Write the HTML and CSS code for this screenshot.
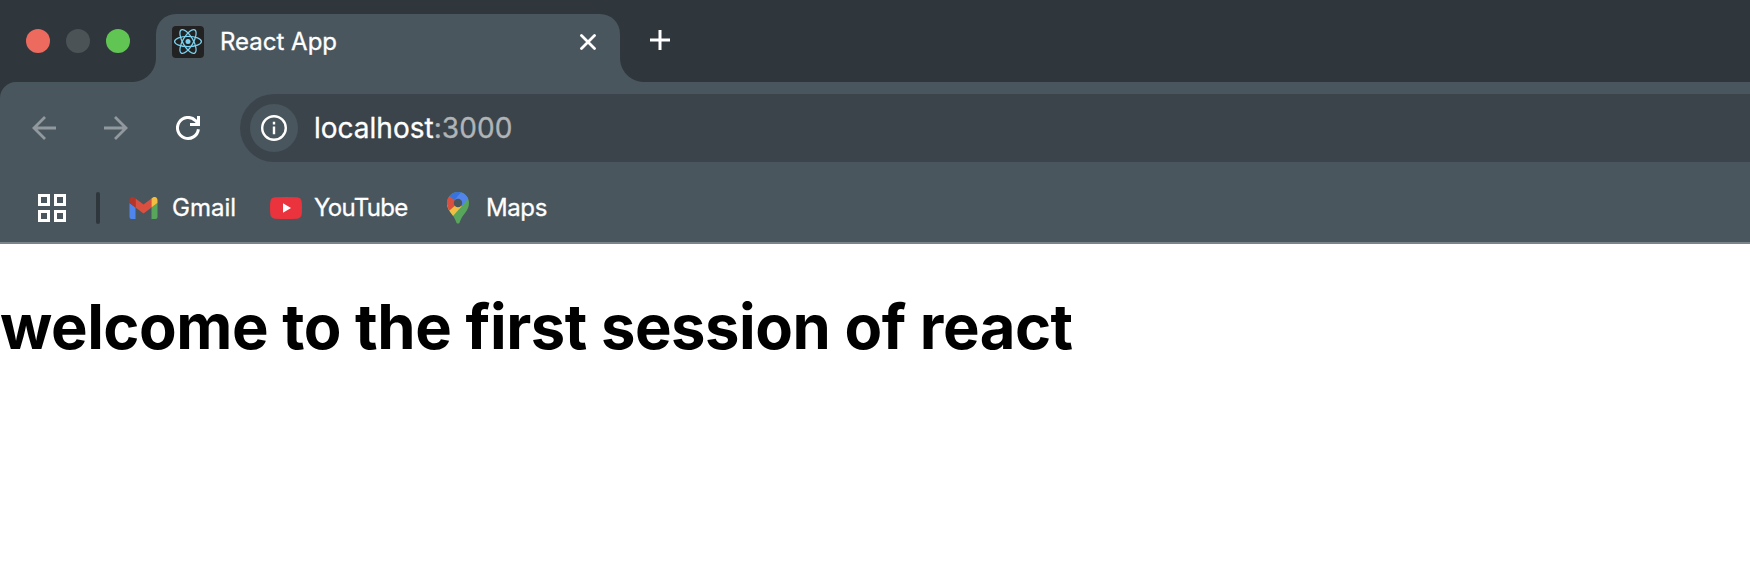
FILE: index.html
```html
<!DOCTYPE html>
<html lang="en">
<head>
<meta charset="utf-8">
<title>React App</title>
<link rel="stylesheet" href="styles.css">
</head>
<body>
<header class="browser">
  <div class="tab-strip">
    <div class="lights"><span class="light red"></span><span class="light gray"></span><span class="light green"></span></div>
    <div class="tab">
      <svg class="favicon" viewBox="0 0 32 32"><rect width="32" height="32" rx="4" fill="#222"/><g fill="none" stroke="#7bd2f0" stroke-width="1.25"><ellipse cx="16" cy="15.5" rx="13.4" ry="5.2"/><ellipse cx="16" cy="15.5" rx="13.4" ry="5.2" transform="rotate(60 16 15.5)"/><ellipse cx="16" cy="15.5" rx="13.4" ry="5.2" transform="rotate(120 16 15.5)"/></g><circle cx="16" cy="15.5" r="2.5" fill="#7bd2f0"/></svg>
      <span class="tab-title"><span>React App</span></span>
      <svg class="close" viewBox="0 0 16 16"><path d="M1.5 1.5l13 13M14.5 1.5l-13 13" stroke="#fff" stroke-width="2.8" stroke-linecap="round"/></svg>
    </div>
    <svg class="plus" viewBox="0 0 20 20"><path d="M0 10h20M10 0v20" stroke="#fff" stroke-width="3"/></svg>
  </div>
  <div class="toolbar">
    <nav class="nav-row">
      <svg class="nav-icon" viewBox="0 0 24 24"><path d="M24 12H2M13 1L2 12l11 11" fill="none" stroke="#92999e" stroke-width="2.8"/></svg>
      <svg class="nav-icon" viewBox="0 0 24 24"><path d="M0 12h22M11 1l11 11-11 11" fill="none" stroke="#92999e" stroke-width="2.8"/></svg>
      <svg class="nav-icon" viewBox="0 0 24 24"><path d="M22.4 13.2A10.5 10.5 0 1 1 19.5 4.6L22.5 8" fill="none" stroke="#fff" stroke-width="3"/><path d="M22.5 0v8.5H14" fill="none" stroke="#fff" stroke-width="3"/></svg>
      <div class="address">
        <span class="site-info"><svg class="info" viewBox="0 0 26 26"><circle cx="13" cy="13" r="11.8" fill="none" stroke="#fff" stroke-width="2.4"/><path d="M13 11.5v7.8M13 6.8v2.6" stroke="#fff" stroke-width="2.4"/></svg></span>
        <span class="url"><span class="host">localhost</span><span class="port">:3000</span></span>
      </div>
    </nav>
    <nav class="bookmarks">
      <svg class="apps" viewBox="0 0 28 28"><path d="M1.500 1.500h9v9h-9zM17.500 1.500h9v9h-9zM1.500 17.500h9v9h-9zM17.500 17.500h9v9h-9z" fill="none" stroke="#fff" stroke-width="3"/></svg>
      <span class="divider"></span>
      <a class="bookmark gmail">
        <svg class="gmail-icon" viewBox="0 0 28 22"><path d="M0 6l6 4.500V22H2a2 2 0 0 1-2-2z" fill="#4f86ee"/><path d="M28 6l-6 4.500V22h4a2 2 0 0 0 2-2z" fill="#58a55c"/><path d="M6 1.500l8 6 8-6v9l-8 6-8-6z" fill="#d95040"/><path d="M0 3C0 .4 3-1 5 .7l1 .8v9L0 6z" fill="#b3362b"/><path d="M28 3C28 .4 25-1 23 .7l-1 .8v9L28 6z" fill="#f2bd42"/></svg>
        <span>Gmail</span>
      </a>
      <a class="bookmark youtube">
        <svg class="youtube-icon" viewBox="0 0 32 22"><path d="M5 .3Q16-.3 27 .3 31.300.600 31.700 5 32.300 11 31.700 17 31.300 21.400 27 21.700 16 22.300 5 21.700.7 21.400.3 17-.3 11 .3 5 .7.600 5 .3z" fill="#ea333d"/><path d="M13 6.300l8 4.700-8 4.700z" fill="#fff"/></svg>
        <span>YouTube</span>
      </a>
      <a class="bookmark maps">
        <svg class="maps-icon" viewBox="0 0 22 32"><defs><clipPath id="pin"><path d="M11 0a11 11 0 0 1 11 11c0 8-6.500 11-9 18.500-.6 2-1 2.100-2 2.100s-1.400-.1-2-2.100C6.500 22 0 19 0 11A11 11 0 0 1 11 0z"/></clipPath></defs><g clip-path="url(#pin)"><path d="M0 0h22v32H0z" fill="#58a55c"/><path d="M-2 14L7 8l8 6-9.500 10.500H-2z" fill="#f2bd42"/><path d="M-2 0l4.600 3.800L11 11 2.500 18.500H-3z" fill="#d95040"/><path d="M2.500 4L0 0h14.500L8 8.500z" fill="#3871e0"/><path d="M14.400 0L7.500 8l7 6.500 7.500-9V0z" fill="#5383ec"/></g><circle cx="11" cy="11" r="4.200" fill="#49565e"/></svg>
        <span>Maps</span>
      </a>
    </nav>
  </div>
</header>
<main><h1>welcome to the first session of react</h1></main>
</body>
</html>
```
FILE: styles.css
```css
* { box-sizing: border-box; }
body { margin: 0; background: #fff; font-family: Inter, "Liberation Sans", sans-serif; overflow: hidden; }
svg { display: block; flex: none; }
.browser { color: #fff; background: #2f373d; -webkit-text-stroke: 0.3px currentColor; }
.tab-strip { height: 82px; display: flex; align-items: flex-start; }
.lights { display: flex; gap: 16px; padding: 29px 0 0 26px; width: 156px; }
.light { width: 24px; height: 24px; border-radius: 50%; }
.red { background: #ed6a5e; }
.gray { background: #4b5356; }
.green { background: #61c554; }
.tab { position: relative; width: 464px; height: 68px; margin-top: 14px; padding: 12px 24px 0 16px; display: flex; align-items: flex-start; background: #49565e; border-radius: 20px 20px 0 0; }
.tab::before, .tab::after { content: ""; position: absolute; bottom: 0; width: 24px; height: 24px; }
.tab::before { right: 100%; background: radial-gradient(circle at 0 0, transparent 23.5px, #49565e 24.500px); }
.tab::after { left: 100%; background: radial-gradient(circle at 100% 0, transparent 23.5px, #49565e 24.500px); }
.favicon { width: 32px; height: 32px; }
.tab-title { flex: 1; margin-left: 16px; font-size: 24px; line-height: 32px; letter-spacing: 0; }
.close { width: 16px; height: 16px; margin-top: 8px; }
.plus { width: 20px; height: 20px; margin: 30px 0 0 30px; }
.toolbar { height: 162px; background: #49565e; border-radius: 16px 0 0 0; border-bottom: 2px solid #7a858b; }
.nav-row { display: flex; align-items: center; height: 92px; padding-left: 32px; gap: 48px; }
.nav-icon { width: 24px; height: 24px; }
.address { flex: 1; height: 68px; margin-left: -8px; padding-left: 10px; display: flex; align-items: center; background: #3c444b; border-radius: 34px 0 0 34px; }
.site-info { width: 48px; height: 48px; border-radius: 50%; background: #49565e; display: flex; align-items: center; justify-content: center; }
.info { width: 26px; height: 26px; }
.url { margin-left: 16px; font-size: 28px; line-height: 34px; letter-spacing: 0; }
.port { color: #b1b4b7; letter-spacing: 0.1px; }
.bookmarks { display: flex; align-items: center; height: 68px; padding-left: 38px; font-size: 24px; line-height: 30px; }
.apps { width: 28px; height: 28px; }
.divider { width: 4px; height: 32px; margin-left: 30px; border-radius: 2px; background: #2f373d; }
.bookmark { display: flex; align-items: center; }
.gmail { margin-left: 29px; width: 141px; gap: 14px; letter-spacing: 0; }
.youtube { width: 177px; gap: 12px; letter-spacing: -0.7px; }
.maps { gap: 17px; letter-spacing: -0.4px; }
.gmail-icon { width: 29px; height: 22px; }
.youtube-icon { width: 32px; height: 22px; }
.maps-icon { width: 22px; height: 32px; }
h1 { margin: 44px 0 0; font-size: 61.5px; line-height: 78px; font-weight: 700; letter-spacing: -0.46px; color: #000; white-space: nowrap; }
```
